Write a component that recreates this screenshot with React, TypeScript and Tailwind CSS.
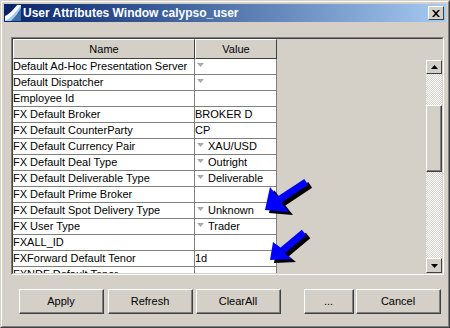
import React from 'react';

type Row = { name: string; value?: string; combo?: boolean };

const rows: Row[] = [
  { name: 'Default Ad-Hoc Presentation Server', combo: true },
  { name: 'Default Dispatcher', combo: true },
  { name: 'Employee Id' },
  { name: 'FX Default Broker', value: 'BROKER D' },
  { name: 'FX Default CounterParty', value: 'CP' },
  { name: 'FX Default Currency Pair', value: 'XAU/USD', combo: true },
  { name: 'FX Default Deal Type', value: 'Outright', combo: true },
  { name: 'FX Default Deliverable Type', value: 'Deliverable', combo: true },
  { name: 'FX Default Prime Broker' },
  { name: 'FX Default Spot Delivery Type', value: 'Unknown', combo: true },
  { name: 'FX User Type', value: 'Trader', combo: true },
  { name: 'FXALL_ID' },
  { name: 'FXForward Default Tenor', value: '1d' },
  { name: 'FXNDF Default Tenor' },
];

const raised =
  'border-t border-l border-t-white border-l-white border-b border-r border-b-[#404040] border-r-[#404040]';

const ComboArrow = () => (
  <svg width="7" height="4" viewBox="0 0 7 4" className="ml-[2px] mr-[4px] mt-[-3px] shrink-0">
    <path d="M0 0h7L3.5 4z" fill="#a8a8a8" />
  </svg>
);

const ScrollButton = ({ up, h }: { up?: boolean; h: string }) => (
  <div className={`${raised} ${h} w-[16px] bg-[#d4d0c8] flex items-center justify-center`}>
    <svg width="7" height="4" viewBox="0 0 7 4">
      <path d={up ? 'M3.5 0L7 4H0z' : 'M0 0h7L3.5 4z'} fill="#000" />
    </svg>
  </div>
);

const WinButton = ({ label, w, ml }: { label: string; w: string; ml: string }) => (
  <button className={`${raised} ${w} ${ml} h-[25px] bg-[#d4d0c8] text-[11px] text-black flex items-center justify-center`}>
    <span className="block w-full h-full border-r border-b border-r-[#808080] border-b-[#808080] leading-[22px]">
      {label}
    </span>
  </button>
);

export default function App() {
  return (
    <div className="relative w-[450px] h-[328px] font-['Liberation_Sans',Arial,sans-serif] select-none">
      <div className="w-full h-full border border-t-[#d4d0c8] border-l-[#d4d0c8] border-b-[#404040] border-r-[#404040] bg-[#d4d0c8]">
        <div className="w-full h-full border border-t-white border-l-white border-b-[#808080] border-r-[#808080] p-[2px]">
          {/* title bar */}
          <div className="h-[18px] flex items-center bg-gradient-to-r from-[#0a246a] to-[#a6caf0]">
            <svg width="16" height="16" viewBox="0 0 16 16" className="ml-[1px] shrink-0">
              <rect width="16" height="16" fill="#a6caf0" />
              <path d="M0 16L0 11C4 9 8 5 12 0H16C12 6 7 12 0 16z" fill="#fff" />
              <path d="M0 0H12C8 5 4 9 0 11z" fill="#0a246a" />
              <path d="M6 16C10 12 13 8 16 3V16z" fill="#3a6ea5" />
            </svg>
            <span className="ml-[2px] text-white font-bold text-[12px] leading-none whitespace-nowrap">
              User Attributes Window calypso_user
            </span>
            <div className="ml-auto mr-[2px] w-[16px] h-[14px] bg-[#d4d0c8] border border-t-white border-l-white border-b-[#404040] border-r-[#404040] flex items-center justify-center">
              <svg width="8" height="7" viewBox="0 0 8 7">
                <path d="M0 0h2l2 2.3L6 0h2L5 3.5 8 7H6L4 4.7 2 7H0l3-3.5z" fill="#000" />
              </svg>
            </div>
          </div>

          {/* sunken panel */}
          <div className="mt-[15px] ml-[7px] mr-[2px] h-[238px] border border-t-[#808080] border-l-[#808080] border-b-white border-r-white">
            <div className="w-full h-full border border-t-[#404040] border-l-[#404040] border-b-[#d4d0c8] border-r-[#d4d0c8] flex overflow-hidden">
              <div className="w-[264px] shrink-0 overflow-hidden">
                <div className="flex h-[20px] text-[11px] text-black">
                  <div className={`${raised} w-[182px] flex items-center justify-center bg-[#d4d0c8]`}>Name</div>
                  <div className={`${raised} w-[82px] flex items-center justify-center bg-[#d4d0c8]`}>Value</div>
                </div>
                {rows.map((r) => (
                  <div key={r.name} className="flex h-[16px] text-[11px] text-black bg-white border-b border-b-[#808080]">
                    <div className="w-[182px] border-r border-r-[#808080] whitespace-nowrap overflow-hidden leading-[15px]">
                      {r.name}
                    </div>
                    <div className="w-[82px] border-r border-r-[#808080] flex items-center whitespace-nowrap overflow-hidden leading-[15px]">
                      {r.combo && <ComboArrow />}
                      {r.value && <span>{r.value}</span>}
                    </div>
                  </div>
                ))}
              </div>
              <div className="flex-1" />
              <div className="w-[16px] shrink-0 mt-[21px] flex flex-col">
                <ScrollButton up h="h-[14px]" />
                <div className="h-[31px] bg-[repeating-conic-gradient(#d4d0c8_0_25%,#ffffff_0_50%)] bg-[length:2px_2px]" />
                <div className={`${raised} h-[67px] bg-[#d4d0c8]`}>
                  <div className="w-full h-full border-r border-b border-r-[#808080] border-b-[#808080]" />
                </div>
                <div className="flex-1 bg-[repeating-conic-gradient(#d4d0c8_0_25%,#ffffff_0_50%)] bg-[length:2px_2px]" />
                <ScrollButton h="h-[15px]" />
              </div>
            </div>
          </div>

          {/* buttons */}
          <div className="mt-[14px] flex">
            <WinButton label="Apply" w="w-[85px]" ml="ml-[15px]" />
            <WinButton label="Refresh" w="w-[85px]" ml="ml-[4px]" />
            <WinButton label="ClearAll" w="w-[85px]" ml="ml-[3px]" />
            <WinButton label="..." w="w-[50px]" ml="ml-[23px]" />
            <WinButton label="Cancel" w="w-[85px]" ml="ml-[2px]" />
          </div>
        </div>
      </div>

      {/* annotation arrows */}
      <svg className="absolute inset-0 pointer-events-none" width="450" height="328" viewBox="0 0 450 328">
        <g transform="translate(4 3)" fill="#000">
          <polygon points="265,210 270,187 277.6,196.6 304.3,179 308.1,184.8 281.4,202.4 289,212" />
          <polygon points="270,260 273,242 280.3,247.8 301.8,229.8 306.3,235.2 284.8,253.2 292,259" />
        </g>
        <g fill="#0000ff">
          <polygon points="265,210 270,187 277.6,196.6 304.3,179 308.1,184.8 281.4,202.4 289,212" />
          <polygon points="270,260 273,242 280.3,247.8 301.8,229.8 306.3,235.2 284.8,253.2 292,259" />
        </g>
      </svg>
    </div>
  );
}
